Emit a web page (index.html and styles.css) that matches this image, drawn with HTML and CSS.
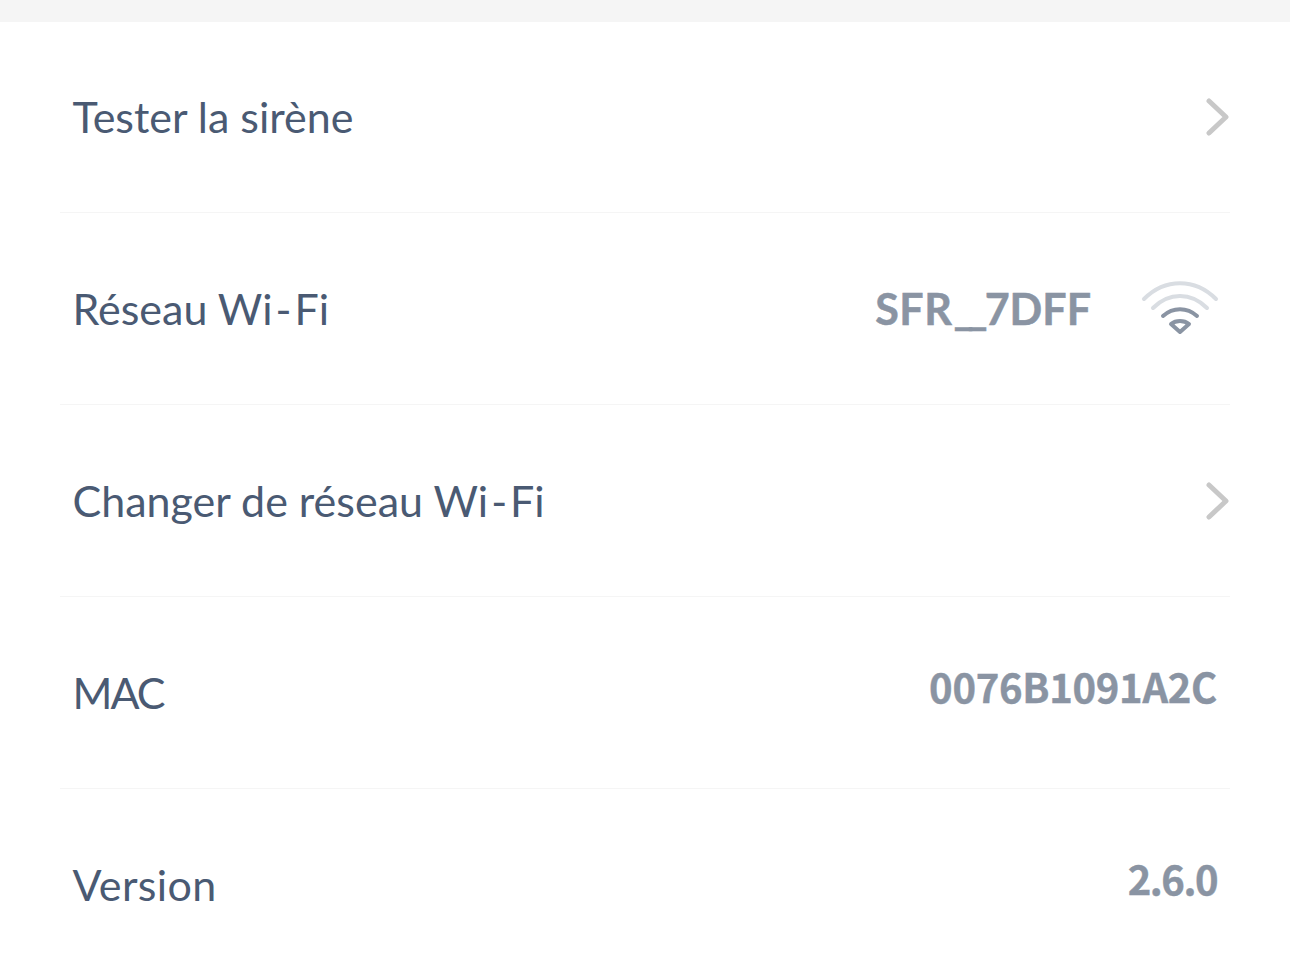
FILE: index.html
```html
<!DOCTYPE html>
<html lang="fr">
<head>
<meta charset="utf-8">
<title>Réglages</title>
<link rel="stylesheet" href="styles.css">
</head>
<body>
<div class="topbar"></div>
<ul class="list">
  <li class="row first">
    <span class="label">Tester la sirène</span>
    <svg class="chevron" viewBox="0 0 24 38" width="24" height="38"><path d="M3 3 L20 19 L3 35" /></svg>
  </li>
  <li class="row">
    <span class="label">Réseau Wi<span class="hyphen">-</span>Fi</span>
    <span class="value wifi-name"><span class="sfr">SFR</span><span class="under">__</span>7DFF</span>
    <svg class="wifi" viewBox="0 0 78 58" width="78" height="58">
      <path class="dim" d="M3 21 C24 0 54 0 75 21"/>
      <path class="dim" d="M12 30 C28 14 50 14 66 30"/>
      <path class="strong" d="M22 38 C32 29 46 29 56 38"/>
      <path class="strong" d="M39 54 L30 46 C35 42 43 42 48 46 Z"/>
    </svg>
  </li>
  <li class="row">
    <span class="label">Changer de réseau Wi<span class="hyphen">-</span>Fi</span>
    <svg class="chevron" viewBox="0 0 24 38" width="24" height="38"><path d="M3 3 L20 19 L3 35" /></svg>
  </li>
  <li class="row">
    <span class="label tight">MAC</span>
    <span class="value raised">0076B1091A2C</span>
  </li>
  <li class="row last">
    <span class="label loose">Version</span>
    <span class="value raised narrow">2.6.0</span>
  </li>
</ul>
</body>
</html>
```
FILE: styles.css
```css
* { box-sizing: border-box; }
html, body { margin: 0; padding: 0; background: #fff; }
body { width: 1290px; height: 968px; overflow: hidden; font-family: "Lato", sans-serif; }
.topbar { height: 22px; background: #f5f5f5; }
.list { list-style: none; margin: 0; padding: 0 60px; }
.row {
  display: flex;
  align-items: center;
  height: 192px;
  padding: 0 13px 0 12.5px;
  border-bottom: 1px solid #f5f5f5;
}
.row.first { height: 191px; }
.row.last { border-bottom: 0; }
.label { font-size: 43px; line-height: 50px; color: #4a5a73; flex: 1; }
.hyphen { padding: 0 3px; }
.tight { letter-spacing: -2px; }
.loose { letter-spacing: 0.4px; }
.value { font-size: 43px; line-height: 50px; font-weight: 700; color: #8a94a3; }
.raised { margin-top: -14px; font-family: "Noto Sans CJK JP", sans-serif; font-size: 40px; letter-spacing: -0.3px; -webkit-text-stroke: 0.4px #8a94a3; }
.narrow { letter-spacing: -1.5px; }
.wifi-name { margin-right: 50px; -webkit-text-stroke: 0.5px #8a94a3; }
.sfr { letter-spacing: 0.6px; }
.under { letter-spacing: -6px; margin-right: 3px; margin-left: 1px; }
.chevron { margin-right: -13px; margin-top: 0; }
.chevron path { fill: none; stroke: #c8c8c8; stroke-width: 5; stroke-linecap: round; stroke-linejoin: round; }
.wifi { margin-right: -2px; margin-top: -4px; }
.wifi path { fill: none; stroke-width: 4; stroke-linecap: round; stroke-linejoin: round; }
.wifi .dim { stroke: #d9dde2; }
.wifi .strong { stroke: #8a94a3; }
```
